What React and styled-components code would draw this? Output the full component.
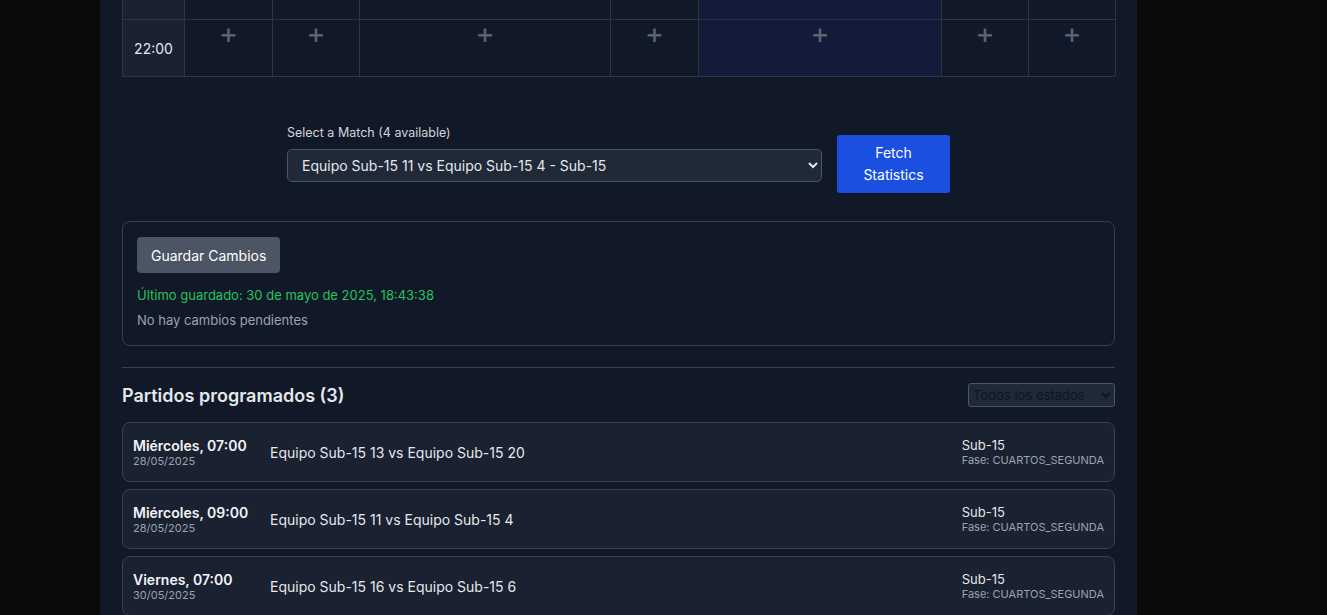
import React from 'react';
import styled, { createGlobalStyle } from 'styled-components';

const columns = [62, 88, 87, 251, 88, 243, 87, 87];
const highlighted = 5;

const matches = [
  { day: 'Miércoles, 07:00', date: '28/05/2025', teams: 'Equipo Sub-15 13 vs Equipo Sub-15 20' },
  { day: 'Miércoles, 09:00', date: '28/05/2025', teams: 'Equipo Sub-15 11 vs Equipo Sub-15 4' },
  { day: 'Viernes, 07:00', date: '30/05/2025', teams: 'Equipo Sub-15 16 vs Equipo Sub-15 6' },
];

function App() {
  return (
    <>
      <GlobalStyle />
      <Page>
        <Main>
          <Schedule>
            {columns.map((_, i) => (
              <Cell key={`top-${i}`} $time={i === 0} $active={i === highlighted} $short />
            ))}
            {columns.map((_, i) =>
              i === 0 ? (
                <Cell key="t" $time>22:00</Cell>
              ) : (
                <Cell key={`c-${i}`} $active={i === highlighted}>
                  <Plus>+</Plus>
                </Cell>
              )
            )}
          </Schedule>

          <MatchPicker>
            <PickerField>
              <Label>Select a Match (4 available)</Label>
              <MatchSelect defaultValue="a">
                <option value="a">Equipo Sub-15 11 vs Equipo Sub-15 4 - Sub-15</option>
              </MatchSelect>
            </PickerField>
            <FetchButton>Fetch Statistics</FetchButton>
          </MatchPicker>

          <SavePanel>
            <SaveButton>Guardar Cambios</SaveButton>
            <SavedText>Último guardado: 30 de mayo de 2025, 18:43:38</SavedText>
            <PendingText>No hay cambios pendientes</PendingText>
          </SavePanel>

          <Divider />

          <ListHeader>
            <Heading>Partidos programados (3)</Heading>
            <StatusSelect defaultValue="all">
              <option value="all">Todos los estados</option>
            </StatusSelect>
          </ListHeader>

          <MatchList>
            {matches.map(m => (
              <MatchCard key={m.day}>
                <When>
                  <Day>{m.day}</Day>
                  <DateText>{m.date}</DateText>
                </When>
                <Teams>{m.teams}</Teams>
                <Meta>
                  <Category>Sub-15</Category>
                  <Phase>Fase: CUARTOS_SEGUNDA</Phase>
                </Meta>
              </MatchCard>
            ))}
          </MatchList>
        </Main>
      </Page>
    </>
  );
}

const GlobalStyle = createGlobalStyle`
  html, body {
    margin: 0;
    padding: 0;
    background: #0a0a0a;
    font-family: Inter, "Liberation Sans", sans-serif;
    overflow: hidden;
  }
`;

const Page = styled.div`
  height: 615px;
  overflow: hidden;
`;

const Main = styled.main`
  margin-left: 100px;
  width: 1037px;
  min-height: 615px;
  box-sizing: border-box;
  padding: 0 22px;
  background: #111827;
`;

const Schedule = styled.div`
  display: grid;
  grid-template-columns: ${columns.map(c => `${c}px`).join(' ')};
  border-left: 1px solid #2b3545;
  border-bottom: 1px solid #2b3545;
`;

const Cell = styled.div`
  box-sizing: border-box;
  height: ${p => (p.$short ? '19px' : '57px')};
  border-right: 1px solid #2b3545;
  border-top: ${p => (p.$short ? 'none' : '1px solid #2b3545')};
  background: ${p => (p.$time ? '#1a2130' : p.$active ? '#121c3a' : '#111827')};
  color: #e5e7eb;
  font-size: 14px;
  display: flex;
  justify-content: center;
  align-items: ${p => (p.$time ? 'center' : 'flex-start')};
`;

const Plus = styled.span`
  color: #596270;
  font-size: 22px;
  font-weight: 700;
  line-height: 1;
  margin-top: 4px;
  font-family: "DejaVu Sans", sans-serif;
`;

const MatchPicker = styled.div`
  display: flex;
  justify-content: center;
  align-items: flex-start;
  gap: 15px;
  margin-top: 48px;
`;

const PickerField = styled.div`
  display: flex;
  flex-direction: column;
  gap: 9px;
`;

const Label = styled.label`
  font-size: 12.5px;
  color: #d1d5db;
`;

const MatchSelect = styled.select`
  width: 535px;
  height: 33px;
  padding: 0 10px;
  background: #1f2937;
  color: #e5e7eb;
  border: 1px solid #4b5563;
  border-radius: 5px;
  font-family: Inter, "Liberation Sans", sans-serif;
  font-size: 14px;
  color-scheme: dark;
`;

const FetchButton = styled.button`
  width: 113px;
  height: 58px;
  margin-top: 10px;
  background: #1a4fe0;
  color: #fff;
  border: none;
  border-radius: 3px;
  font-family: Inter, "Liberation Sans", sans-serif;
  font-size: 14px;
  line-height: 22px;
  padding: 0 14px;
`;

const SavePanel = styled.section`
  margin-top: 28px;
  border: 1px solid #374151;
  border-radius: 8px;
  padding: 15px 14px 17px;
  display: flex;
  flex-direction: column;
  align-items: flex-start;
`;

const SaveButton = styled.button`
  height: 36px;
  padding: 0 14px;
  background: #4b5563;
  color: #fff;
  border: none;
  border-radius: 4px;
  font-family: Inter, "Liberation Sans", sans-serif;
  font-size: 14px;
`;

const SavedText = styled.div`
  margin-top: 14px;
  font-size: 13px;
  color: #22c55e;
`;

const PendingText = styled.div`
  margin-top: 9px;
  font-size: 13px;
  color: #9ca3af;
`;

const Divider = styled.hr`
  margin: 21px 0 0;
  border: none;
  border-top: 1px solid #374151;
`;

const ListHeader = styled.div`
  display: flex;
  justify-content: space-between;
  align-items: center;
  margin-top: 15px;
`;

const Heading = styled.h2`
  margin: 0;
  font-size: 18px;
  font-weight: 600;
  color: #e5e7eb;
`;

const StatusSelect = styled.select`
  width: 147px;
  height: 24px;
  background: #1f2937;
  color: #0f1520;
  border: 1px solid #4b5563;
  border-radius: 3px;
  font-family: Inter, "Liberation Sans", sans-serif;
  font-size: 13px;
  color-scheme: dark;
`;

const MatchList = styled.div`
  display: flex;
  flex-direction: column;
  gap: 7px;
  margin-top: 15px;
`;

const MatchCard = styled.div`
  height: 60px;
  box-sizing: border-box;
  display: flex;
  align-items: center;
  padding: 0 10px;
  background: #1a2130;
  border: 1px solid #374151;
  border-radius: 8px;
`;

const When = styled.div`
  width: 137px;
  display: flex;
  flex-direction: column;
`;

const Day = styled.div`
  font-size: 14px;
  font-weight: 600;
  color: #f3f4f6;
`;

const DateText = styled.div`
  font-size: 11px;
  color: #9ca3af;
`;

const Teams = styled.div`
  flex: 1;
  font-size: 14px;
  color: #e5e7eb;
`;

const Meta = styled.div`
  display: flex;
  flex-direction: column;
`;

const Category = styled.div`
  font-size: 13px;
  color: #e5e7eb;
`;

const Phase = styled.div`
  font-size: 11px;
  color: #9ca3af;
`;

export default App;
